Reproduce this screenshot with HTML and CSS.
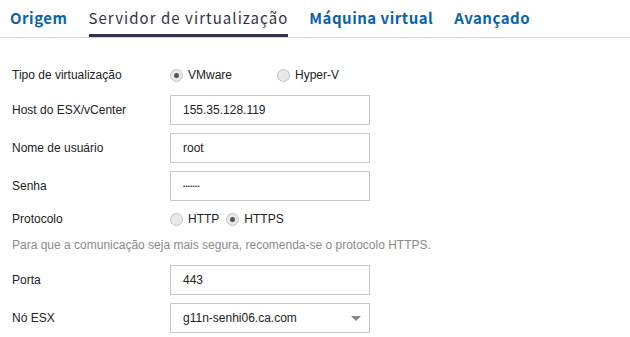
FILE: index.html
```html
<!DOCTYPE html>
<html lang="pt-BR">
<head>
    <meta charset="UTF-8">
    <title>Servidor de virtualização</title>
    <link rel="stylesheet" href="styles.css">
</head>
<body>
    <div class="tabs">
        <a class="tab">Origem</a>
        <a class="tab active">Servidor de virtualização</a>
        <a class="tab">Máquina virtual</a>
        <a class="tab">Avançado</a>
    </div>

    <form class="form">
        <div class="row radio-row first">
            <label class="label">Tipo de virtualização</label>
            <div class="options">
                <span class="radio checked"></span><span class="opt wide">VMware</span>
                <span class="radio"></span><span class="opt">Hyper-V</span>
            </div>
        </div>
        <div class="row after-radio">
            <label class="label">Host do ESX/vCenter</label>
            <div class="field">155.35.128.119</div>
        </div>
        <div class="row">
            <label class="label">Nome de usuário</label>
            <div class="field">root</div>
        </div>
        <div class="row">
            <label class="label">Senha</label>
            <div class="field"><span class="pass">•••••••</span></div>
        </div>
        <div class="row radio-row">
            <label class="label">Protocolo</label>
            <div class="options">
                <span class="radio"></span><span class="opt">HTTP</span>
                <span class="radio checked"></span><span class="opt">HTTPS</span>
            </div>
        </div>
        <p class="hint">Para que a comunicação seja mais segura, recomenda-se o protocolo HTTPS.</p>
        <div class="row">
            <label class="label">Porta</label>
            <div class="field">443</div>
        </div>
        <div class="row">
            <label class="label">Nó ESX</label>
            <div class="field select">g11n-senhi06.ca.com<span class="arrow"></span></div>
        </div>
    </form>
</body>
</html>
```
FILE: styles.css
```css
body { margin: 0; background: #fff; font-family: "Liberation Sans", Arial, sans-serif; font-size: 12px; color: #222; }

/* abas */
.tabs {
    display: flex;
    gap: 21px;
    height: 37px;
    padding-left: 10px;
    border-bottom: 1px solid #d3d6de;
    font-family: "Noto Sans CJK JP", "Liberation Sans", sans-serif;
}
.tab {
    font-size: 15px;
    font-weight: bold;
    letter-spacing: 0.5px;
    color: #0a62a8;
    line-height: 36px;
    box-sizing: border-box;
    border-bottom: 3px solid transparent;
}
.tab.active { color: #35304a; font-weight: normal; letter-spacing: 1.05px; border-bottom-color: #35304a; }

/* formulário */
.form { padding: 22px 0 0 12px; }
.row { display: flex; align-items: center; height: 30px; margin-top: 8px; }
.row.first { margin-top: 0; }
.row.after-radio { margin-top: 5px; }
.radio-row { margin-top: 3px; }
.label { width: 158px; }
.options { display: flex; align-items: center; }
.radio {
    width: 11px;
    height: 11px;
    border-radius: 50%;
    border: 1px solid #c4c4c4;
    background: #e8e8e8;
    position: relative;
    margin-right: 5px;
}
.radio.checked::after {
    content: "";
    position: absolute;
    left: 3px;
    top: 3px;
    width: 5px;
    height: 5px;
    border-radius: 50%;
    background: #555;
}
.opt { margin-right: 7px; }
.opt.wide { margin-right: 45px; }
.field {
    width: 200px;
    height: 30px;
    box-sizing: border-box;
    border: 1px solid #c8c8c8;
    padding-left: 12px;
    line-height: 28px;
    position: relative;
}
.pass { font-size: 6px; letter-spacing: 0.3px; vertical-align: top; }
.select .arrow {
    position: absolute;
    right: 8px;
    top: 12px;
    border-left: 5px solid transparent;
    border-right: 5px solid transparent;
    border-top: 5px solid #888;
}
.hint { margin: 3px 0 0; color: #8a8a8a; line-height: 16px; }
.hint + .row { margin-top: 12px; }
```
